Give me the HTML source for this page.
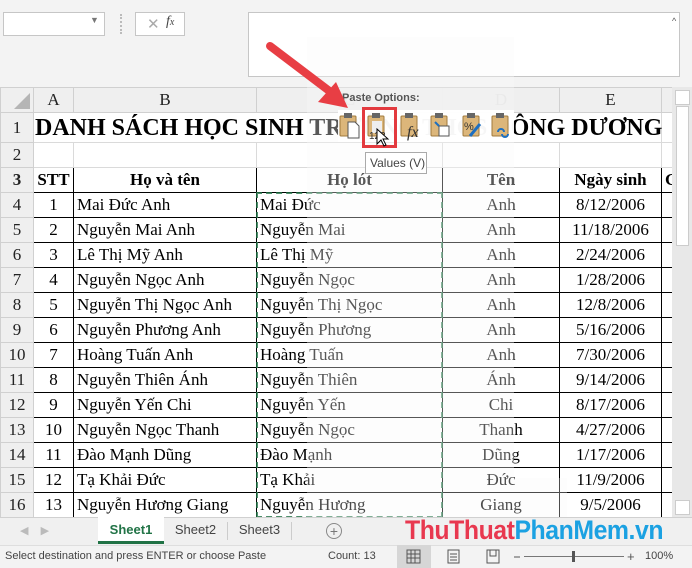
<!DOCTYPE html>
<html><head><meta charset="utf-8"><style>
*{margin:0;padding:0;box-sizing:border-box}
body{width:692px;height:568px;overflow:hidden;background:#fff;position:relative;font-family:"Liberation Serif",serif}
.abs{position:absolute}
table{position:absolute;left:0;top:87px;border-collapse:collapse;table-layout:fixed;width:672px}
td{font-size:17px;color:#000;white-space:nowrap;overflow:visible;padding:0 3px;line-height:20px}
td.h{background:#efefef;color:#222;text-align:center;border:1px solid #d0d0d0;font-size:17px;padding:0}
td.g{border:1px solid #dadada}
td.b{border:1px solid #000}
.c{text-align:center}
.ui{font-family:"Liberation Sans",sans-serif}
</style></head><body>
<div class="abs" style="left:0;top:0;width:692px;height:87px;background:#f3f3f3"></div>
<div class="abs" style="left:3px;top:12px;width:102px;height:24px;background:#fff;border:1px solid #c6c6c6"></div>
<div class="abs ui" style="left:90px;top:15px;font-size:9px;color:#777">▼</div>
<div class="abs" style="left:120px;top:14px;width:2px;height:20px;border-left:2px dotted #bbb"></div>
<div class="abs" style="left:135px;top:12px;width:50px;height:24px;background:#fff;border:1px solid #c6c6c6"></div>
<div class="abs ui" style="left:147px;top:15px;font-size:15px;color:#aaa">✕</div>
<div class="abs" style="left:166px;top:14px;font-size:14px;color:#444;font-style:italic">f<span style="font-size:10px">x</span></div>
<div class="abs" style="left:248px;top:12px;width:432px;height:65px;background:#fff;border:1px solid #c6c6c6"></div>
<div class="abs ui" style="left:672px;top:16px;font-size:9px;color:#555">^</div>
<table>
<colgroup><col style="width:33px"><col style="width:40px"><col style="width:183px"><col style="width:186px"><col style="width:117px"><col style="width:102px"><col style="width:11px"></colgroup>
<tr style="height:25px"><td class="h" style="background:#efefef"></td><td class="h">A</td><td class="h">B</td><td class="h">C</td><td class="h">D</td><td class="h">E</td><td class="h"></td></tr>
<tr style="height:30px"><td class="h">1</td><td colspan="5" style="font-weight:bold;font-size:24px;padding-left:1px;border-right:1px solid #dadada">DANH SÁCH HỌC SINH TRƯỜNG THCS ĐÔNG DƯƠNG</td><td class="g"></td></tr>
<tr style="height:25px"><td class="h">2</td><td class="g"></td><td class="g"></td><td class="g"></td><td class="g"></td><td class="g"></td><td class="g"></td></tr>
<tr style="height:25px;font-weight:bold"><td class="h">3</td><td class="b c" style="font-weight:bold;padding:0">STT</td><td class="b c" style="font-weight:bold">Họ và tên</td><td class="b c" style="font-weight:bold">Họ lót</td><td class="b c" style="font-weight:bold">Tên</td><td class="b c" style="font-weight:bold">Ngày sinh</td><td class="b" style="font-weight:bold;padding:0 0 0 3px;overflow:hidden">G</td></tr>
<tr style="height:25px"><td class="h">4</td><td class="b c">1</td><td class="b">Mai Đức Anh</td><td class="b">Mai Đức</td><td class="b c">Anh</td><td class="b c">8/12/2006</td><td class="b"></td></tr>
<tr style="height:25px"><td class="h">5</td><td class="b c">2</td><td class="b">Nguyễn Mai Anh</td><td class="b">Nguyễn Mai</td><td class="b c">Anh</td><td class="b c">11/18/2006</td><td class="b"></td></tr>
<tr style="height:25px"><td class="h">6</td><td class="b c">3</td><td class="b">Lê Thị Mỹ Anh</td><td class="b">Lê Thị Mỹ</td><td class="b c">Anh</td><td class="b c">2/24/2006</td><td class="b"></td></tr>
<tr style="height:25px"><td class="h">7</td><td class="b c">4</td><td class="b">Nguyễn Ngọc Anh</td><td class="b">Nguyễn Ngọc</td><td class="b c">Anh</td><td class="b c">1/28/2006</td><td class="b"></td></tr>
<tr style="height:25px"><td class="h">8</td><td class="b c">5</td><td class="b">Nguyễn Thị Ngọc Anh</td><td class="b">Nguyễn Thị Ngọc</td><td class="b c">Anh</td><td class="b c">12/8/2006</td><td class="b"></td></tr>
<tr style="height:25px"><td class="h">9</td><td class="b c">6</td><td class="b">Nguyễn Phương Anh</td><td class="b">Nguyễn Phương</td><td class="b c">Anh</td><td class="b c">5/16/2006</td><td class="b"></td></tr>
<tr style="height:25px"><td class="h">10</td><td class="b c">7</td><td class="b">Hoàng Tuấn Anh</td><td class="b">Hoàng Tuấn</td><td class="b c">Anh</td><td class="b c">7/30/2006</td><td class="b"></td></tr>
<tr style="height:25px"><td class="h">11</td><td class="b c">8</td><td class="b">Nguyễn Thiên Ánh</td><td class="b">Nguyễn Thiên</td><td class="b c">Ánh</td><td class="b c">9/14/2006</td><td class="b"></td></tr>
<tr style="height:25px"><td class="h">12</td><td class="b c">9</td><td class="b">Nguyễn Yến Chi</td><td class="b">Nguyễn Yến</td><td class="b c">Chi</td><td class="b c">8/17/2006</td><td class="b"></td></tr>
<tr style="height:25px"><td class="h">13</td><td class="b c">10</td><td class="b">Nguyễn Ngọc Thanh</td><td class="b">Nguyễn Ngọc</td><td class="b c">Thanh</td><td class="b c">4/27/2006</td><td class="b"></td></tr>
<tr style="height:25px"><td class="h">14</td><td class="b c">11</td><td class="b">Đào Mạnh Dũng</td><td class="b">Đào Mạnh</td><td class="b c">Dũng</td><td class="b c">1/17/2006</td><td class="b"></td></tr>
<tr style="height:25px"><td class="h">15</td><td class="b c">12</td><td class="b">Tạ Khải Đức</td><td class="b">Tạ Khải</td><td class="b c">Đức</td><td class="b c">11/9/2006</td><td class="b"></td></tr>
<tr style="height:25px"><td class="h">16</td><td class="b c">13</td><td class="b">Nguyễn Hương Giang</td><td class="b">Nguyễn Hương</td><td class="b c">Giang</td><td class="b c">9/5/2006</td><td class="b"></td></tr>
</table>
<svg class="abs" style="left:10px;top:93px" width="20" height="16"><polygon points="20,0 20,16 4,16" fill="#b5b5b5"/></svg>
<div class="abs" style="left:256px;top:192px;width:187px;height:326px;border:2px dashed #217346;opacity:.8"></div>
<div class="abs" style="left:307px;top:37px;width:207px;height:441px;background:rgba(248,248,248,0.35)"></div>
<div class="abs" style="left:307px;top:478px;width:260px;height:40px;background:rgba(248,248,248,0.3)"></div>
<div class="abs" style="left:338px;top:88px;width:176px;height:22px;background:rgba(240,240,240,0.95)"></div>
<div class="abs ui" style="left:342px;top:92px;font-size:11px;font-weight:bold;color:#555">Paste Options:</div>
<div class="abs" style="left:338px;top:110px;width:176px;height:32px;background:rgba(255,255,255,0.95)"></div>
<svg class="abs" style="left:338px;top:112px" width="176" height="30">
<g fill="#dcb67a" stroke="#a07a3c" stroke-width="1">
<rect x="2" y="4" width="16" height="20" rx="1"/><rect x="30" y="4" width="16" height="20" rx="1"/><rect x="63" y="4" width="16" height="20" rx="1"/><rect x="93" y="4" width="16" height="20" rx="1"/><rect x="125" y="4" width="16" height="20" rx="1"/><rect x="154" y="4" width="16" height="20" rx="1"/></g>
<g fill="#666"><rect x="6" y="1" width="8" height="5"/><rect x="34" y="1" width="8" height="5"/><rect x="67" y="1" width="8" height="5"/><rect x="97" y="1" width="8" height="5"/><rect x="129" y="1" width="8" height="5"/><rect x="158" y="1" width="8" height="5"/></g>
<path d="M10 10h7l4 4v12h-11z" fill="#fff" stroke="#555"/>
<rect x="34" y="9" width="10" height="12" fill="#eee"/>
<text x="31" y="27" font-size="10" font-family="Liberation Sans" fill="#333">123</text>
<text x="69" y="25" font-size="16" font-style="italic" font-family="Liberation Serif" fill="#333">fx</text>
<rect x="101" y="14" width="10" height="10" fill="#fff" stroke="#555"/><path d="M97 10l4 4" stroke="#1e6fc0" stroke-width="2"/>
<text x="126" y="18" font-size="11" font-family="Liberation Sans" fill="#333">%</text><path d="M132 24l10-12" stroke="#1e6fc0" stroke-width="3"/>
<path d="M160 20a3 3 0 0 1 6 0M164 22a3 3 0 0 0 6 0" stroke="#1e6fc0" stroke-width="2" fill="none"/>
</svg>
<div class="abs" style="left:362px;top:107px;width:35px;height:41px;border:3px solid #e33a3f"></div>
<svg class="abs" style="left:376px;top:128px" width="14" height="20"><path d="M1 1v15l4-4 3 6 2-1-3-6h5z" fill="#fff" stroke="#000"/></svg>
<div class="abs ui" style="left:365px;top:152px;width:62px;height:22px;background:#fff;border:1px solid #aaa;font-size:12px;color:#444;padding:3px 0 0 4px;white-space:nowrap">Values (V)</div>
<svg class="abs" style="left:260px;top:38px" width="100" height="80"><line x1="10" y1="8" x2="72" y2="55" stroke="#e83e44" stroke-width="8" stroke-linecap="round"/><polygon points="88,70 58,64 76,44" fill="#e83e44"/></svg>
<div class="abs" style="left:672px;top:87px;width:20px;height:430px;background:#e8e8e8"></div>
<div class="abs" style="left:675px;top:90px;width:15px;height:15px;background:#fff;border:1px solid #ccc"></div>
<div class="abs" style="left:676px;top:106px;width:13px;height:140px;background:#fff;border:1px solid #ccc"></div>
<div class="abs" style="left:675px;top:500px;width:15px;height:15px;background:#fff;border:1px solid #ccc"></div>
<div class="abs" style="left:0;top:517px;width:692px;height:28px;background:#f0f0f0;border-top:1px solid #d0d0d0"></div>
<div class="abs ui" style="left:20px;top:524px;font-size:11px;color:#bbb">◀&nbsp;&nbsp;&nbsp;&nbsp;▶</div>
<div class="abs ui" style="left:98px;top:517px;width:66px;height:27px;background:#fff;border-bottom:3px solid #217346;font-size:13px;font-weight:bold;color:#217346;text-align:center;line-height:26px">Sheet1</div>
<div class="abs ui" style="left:164px;top:522px;width:64px;height:18px;border-right:1px solid #ccc;font-size:13px;color:#444;text-align:center">Sheet2</div>
<div class="abs ui" style="left:228px;top:522px;width:64px;height:18px;border-right:1px solid #ccc;font-size:13px;color:#444;text-align:center">Sheet3</div>
<div class="abs ui" style="left:326px;top:523px;width:16px;height:16px;border:1px solid #888;border-radius:50%;font-size:14px;color:#777;text-align:center;line-height:14px">+</div>
<div class="abs ui" style="left:405px;top:515px;font-size:27px;font-weight:bold;letter-spacing:-0.5px;transform:scaleX(0.92);transform-origin:left"><span style="color:#e8384f">ThuThuat</span><span style="color:#1ba1e2">PhanMem.vn</span></div>
<div class="abs" style="left:0;top:545px;width:692px;height:23px;background:#f3f3f3;border-top:1px solid #dedede"></div>
<div class="abs ui" style="left:5px;top:550px;font-size:11px;color:#444">Select destination and press ENTER or choose Paste</div>
<div class="abs ui" style="left:328px;top:550px;font-size:11px;color:#444">Count: 13</div>
<div class="abs" style="left:397px;top:545px;width:34px;height:23px;background:#d6d6d6"></div>
<svg class="abs" style="left:406px;top:549px" width="130" height="16" fill="none" stroke="#555">
<rect x="1" y="1" width="13" height="13"/><path d="M1 5h13M1 9h13M5 1v13M9 1v13"/>
<rect x="42" y="1" width="11" height="13"/><path d="M44 5h7M44 8h7M44 11h7"/>
<path d="M81 1h12v13h-12zM84 1v6h6v-6"/>
<path d="M108 8h6" /></svg>
<div class="abs" style="left:524px;top:556px;width:100px;height:1px;background:#777"></div>
<div class="abs" style="left:572px;top:551px;width:3px;height:11px;background:#555"></div>
<div class="abs ui" style="left:627px;top:549px;font-size:13px;color:#555">+</div>
<div class="abs ui" style="left:645px;top:550px;font-size:11px;color:#444">100%</div>
</body></html>
